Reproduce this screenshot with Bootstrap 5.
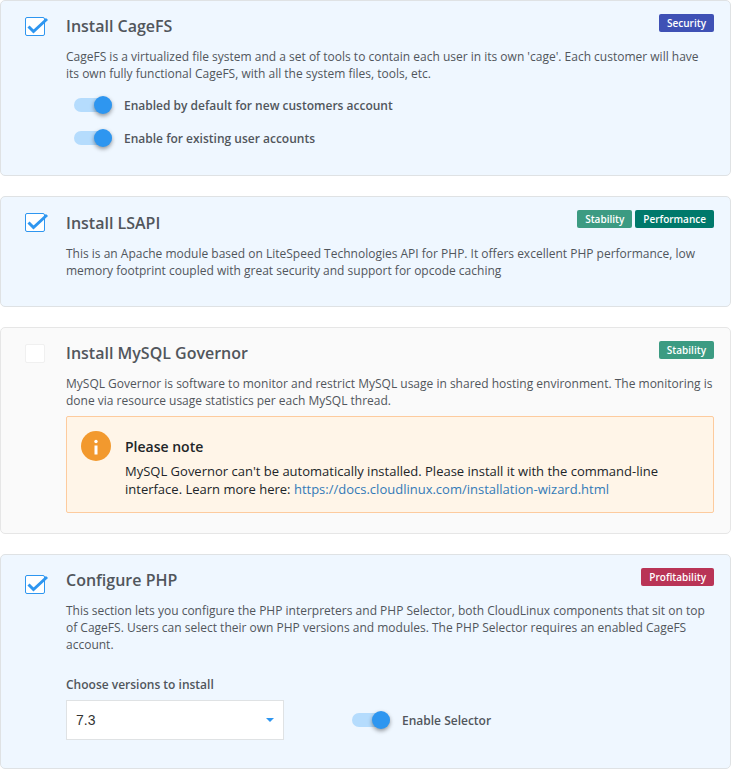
<!DOCTYPE html>
<html lang="en">
<head>
<meta charset="UTF-8">
<title>Installation wizard</title>
<link href="https://cdn.jsdelivr.net/npm/bootstrap@5.3.3/dist/css/bootstrap.min.css" rel="stylesheet">
<style>
body{margin:0;background:#fff;font-family:"Open Sans",sans-serif;font-size:12px;line-height:17px;color:#51565c}
.wiz-card{background:#eff7ff;border:1px solid #dfe2e4;border-radius:5px;padding:13px 16px 0 24px;margin-bottom:20px}
.wiz-card.off{background:#fafafa;border-color:#e6e6e6}
.h-cage{height:176px}
.h-lsapi{height:111px}
.h-lsapi .wiz-title{margin-top:1px}
.h-mysql{height:207px}
.h-php{height:215px;margin-bottom:0}
.h-php .wiz-check{margin-top:7px}
.wiz-check{width:20px;height:19px;flex:none;margin-top:3px;margin-right:21px;background:#fff;border:1px solid #2e96f0;border-radius:2px;position:relative}
.off .wiz-check{border-color:#f0f0f0}
.wiz-check svg{position:absolute;left:1px;top:-3px}
.wiz-title{font-size:16px;line-height:24px;font-weight:600;margin:0;color:#51565c}
.wiz-tag{font-size:10px;line-height:18px;height:18px;font-weight:600;color:#fff;border-radius:2px;padding:0 8px}
.wiz-tags{display:flex;gap:3px}
.tag-sec{background:#3f51b5}
.tag-stab{background:#3c9b82}
.tag-perf{background:#00796b}
.tag-prof{background:#b93456}
.wiz-text{margin:10px 0 0}
.wiz-row{display:flex;align-items:center;font-weight:600;height:16px}
.wiz-rows{margin:15px 0 0 8px;display:flex;flex-direction:column;gap:17px}
.wiz-toggle{width:38px;height:14px;background:#b5dcfd;border-radius:7px;position:relative;flex:none;margin-right:12px}
.wiz-toggle::after{content:"";position:absolute;right:0;top:-2px;width:18px;height:18px;border-radius:50%;background:#2e96f0;box-shadow:0 2px 4px rgba(0,0,0,.4)}
.wiz-note{background:#fff5e8;border:1px solid #fdcb9e;border-radius:2px;padding:14px;margin-top:7px;color:#212529;font-size:13px;line-height:18px}
.wiz-note-icon{width:30px;height:30px;flex:none;margin-right:14px}
.wiz-note-title{font-size:14px;font-weight:600;line-height:20px;margin:6px 0 5px}
.wiz-note a{color:#337ab7;text-decoration:none}
.wiz-label{font-weight:600;margin:23px 0 7px}
.wiz-select{width:218px;height:40px;background:#fff;border:1px solid #dfe2e4;display:flex;align-items:center;justify-content:space-between;padding:0 9px;font-family:"Liberation Sans",sans-serif;font-size:14px;color:#333}
.wiz-caret{width:0;height:0;border-left:4px solid transparent;border-right:4px solid transparent;border-top:4px solid #2e96f0}
.wiz-selector{margin-left:68px}
</style>
</head>
<body>

<div class="wiz-card h-cage">
  <div class="d-flex">
    <div class="wiz-check"><svg width="22" height="20" viewBox="0 0 22 20"><path d="M1.5 11.5l5 5L20 4" fill="none" stroke="#2e96f0" stroke-width="3"/></svg></div>
    <div class="flex-grow-1">
      <div class="d-flex justify-content-between align-items-start">
        <h5 class="wiz-title">Install CageFS</h5>
        <span class="wiz-tag tag-sec">Security</span>
      </div>
      <p class="wiz-text">CageFS is a virtualized file system and a set of tools to contain each user in its own 'cage'. Each customer will have its own fully functional CageFS, with all the system files, tools, etc.</p>
      <div class="wiz-rows">
        <div class="wiz-row"><span class="wiz-toggle"></span>Enabled by default for new customers account</div>
        <div class="wiz-row"><span class="wiz-toggle"></span>Enable for existing user accounts</div>
      </div>
    </div>
  </div>
</div>

<div class="wiz-card h-lsapi">
  <div class="d-flex">
    <div class="wiz-check"><svg width="22" height="20" viewBox="0 0 22 20"><path d="M1.5 11.5l5 5L20 4" fill="none" stroke="#2e96f0" stroke-width="3"/></svg></div>
    <div class="flex-grow-1">
      <div class="d-flex justify-content-between align-items-start">
        <h5 class="wiz-title">Install LSAPI</h5>
        <div class="wiz-tags"><span class="wiz-tag tag-stab">Stability</span><span class="wiz-tag tag-perf">Performance</span></div>
      </div>
      <p class="wiz-text">This is an Apache module based on LiteSpeed Technologies API for PHP. It offers excellent PHP performance, low memory footprint coupled with great security and support for opcode caching</p>
    </div>
  </div>
</div>

<div class="wiz-card off h-mysql">
  <div class="d-flex">
    <div class="wiz-check"></div>
    <div class="flex-grow-1">
      <div class="d-flex justify-content-between align-items-start">
        <h5 class="wiz-title">Install MySQL Governor</h5>
        <span class="wiz-tag tag-stab">Stability</span>
      </div>
      <p class="wiz-text">MySQL Governor is software to monitor and restrict MySQL usage in shared hosting environment. The monitoring is done via resource usage statistics per each MySQL thread.</p>
      <div class="wiz-note d-flex">
        <svg class="wiz-note-icon" viewBox="0 0 30 30"><circle cx="15" cy="15" r="15" fill="#f2992e"/><circle cx="15" cy="10.5" r="1.7" fill="#fff"/><rect x="13.5" y="14.5" width="3" height="9" fill="#fff"/></svg>
        <div>
          <div class="wiz-note-title">Please note</div>
          <div>MySQL Governor can't be automatically installed. Please install it with the command-line interface. Learn more here: <a href="#">https://docs.cloudlinux.com/installation-wizard.html</a></div>
        </div>
      </div>
    </div>
  </div>
</div>

<div class="wiz-card h-php">
  <div class="d-flex">
    <div class="wiz-check"><svg width="22" height="20" viewBox="0 0 22 20"><path d="M1.5 11.5l5 5L20 4" fill="none" stroke="#2e96f0" stroke-width="3"/></svg></div>
    <div class="flex-grow-1">
      <div class="d-flex justify-content-between align-items-start">
        <h5 class="wiz-title">Configure PHP</h5>
        <span class="wiz-tag tag-prof">Profitability</span>
      </div>
      <p class="wiz-text">This section lets you configure the PHP interpreters and PHP Selector, both CloudLinux components that sit on top of CageFS. Users can select their own PHP versions and modules. The PHP Selector requires an enabled CageFS account.</p>
      <div class="wiz-label">Choose versions to install</div>
      <div class="d-flex align-items-center">
        <div class="wiz-select">7.3<span class="wiz-caret"></span></div>
        <div class="wiz-row wiz-selector"><span class="wiz-toggle"></span>Enable Selector</div>
      </div>
    </div>
  </div>
</div>

<script src="https://cdn.jsdelivr.net/npm/bootstrap@5.3.3/dist/js/bootstrap.bundle.min.js"></script>
</body>
</html>
